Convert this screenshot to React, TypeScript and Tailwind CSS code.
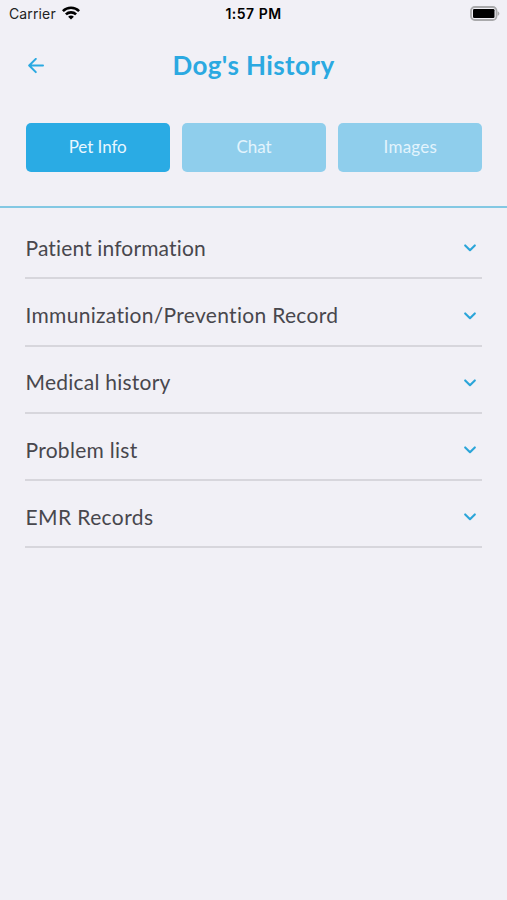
import {useState} from "react";

const tabs = [
    {label: "Pet Info", tracking: "tracking-[-0.05px]"},
    {label: "Chat", tracking: "tracking-[-0.05px]"},
    {label: "Images", tracking: "tracking-[0.25px]"},
];

const sections = [
    {title: "Patient information", tracking: "tracking-[0.14px]"},
    {title: "Immunization/Prevention Record", tracking: "tracking-[0.3px]"},
    {title: "Medical history", tracking: "tracking-[0.24px]"},
    {title: "Problem list", tracking: "tracking-[0.28px]"},
    {title: "EMR Records", tracking: "tracking-[0.4px]"},
];

const StatusBar = () => {
    return (
        <div className="grid h-7 grid-cols-3 items-center px-[7px] font-['Inter',sans-serif] text-black">
            <div className="flex items-center gap-[6px] pl-[2px]">
                <span className="text-[14px] leading-none tracking-[0.13px] text-[#222]">Carrier</span>
                <svg className="-mt-[2px] h-[14px] w-[18px]" viewBox="0 0 18 14" fill="none" stroke="currentColor" strokeWidth="2.6">
                    <path d="M0.9 5.1C5.4 0.7 12.6 0.7 17.1 5.1" />
                    <path d="M3.9 8.4C6.7 5.7 11.3 5.7 14.1 8.4" />
                    <path d="M9 13.6L6.1 10.7C7.7 9.2 10.3 9.2 11.9 10.7Z" fill="currentColor" stroke="none" />
                </svg>
            </div>
            <span className="text-center text-[14px] font-semibold leading-none tracking-[0.5px]">1:57 PM</span>
            <svg className="-mt-[2px] h-[15px] w-[31px] justify-self-end" viewBox="0 0 31 15">
                <rect x="2" y="1" width="25.5" height="13" rx="3.8" fill="#f1f0f6" stroke="#a9a9ab" strokeWidth="1.8" />
                <rect x="4" y="3" width="21.5" height="9" rx="1.2" fill="#000" />
                <path d="M28.6 5.2C31 6.2 31 8.8 28.6 9.8Z" fill="#a9a9ab" />
            </svg>
        </div>
    )
}

const App = () => {
    const [activeTab, setActiveTab] = useState("Pet Info");

    return (
        <main className="h-[900px] w-full bg-[#f1f0f6] font-['Lato',sans-serif]">
            <StatusBar />

            {/* Header */}
            <header className="grid h-[75px] grid-cols-[40px_1fr_40px] items-center px-[25px]">
                <button aria-label="Back" className="text-[#2ba9e1]">
                    <svg className="ml-[3px] h-4 w-4" viewBox="0 0 16 16" fill="none" stroke="currentColor" strokeWidth="2" strokeLinecap="round" strokeLinejoin="round">
                        <path d="M15 7.5H1.6M7.8 0.9L1.2 7.5L7.8 14.1" />
                    </svg>
                </button>
                <h1 className="pb-[2px] text-center text-[26px] font-bold leading-none tracking-[0.4px] text-[#2ba9e1]">Dog&apos;s History</h1>
            </header>

            {/* Tabs */}
            <nav className="grid grid-cols-3 gap-3 pb-[34px] pl-[25.5px] pr-[24.5px] pt-5">
                {tabs.map((tab) => (
                    <button
                        key={tab.label}
                        onClick={() => setActiveTab(tab.label)}
                        className={`h-[49px] rounded-[5px] pb-[2px] text-[17px] ${tab.tracking} ${tab.label === activeTab ? "bg-[#2aabe4] text-[#e8f7ff]" : "bg-[#8fceec] text-[#e3f4fd]"}`}
                    >
                        {tab.label}
                    </button>
                ))}
            </nav>

            {/* Record sections */}
            <div className="border-t-2 border-[#83c8e3] px-[25px] pt-[4px]">
                {sections.map((section) => (
                    <button
                        key={section.title}
                        className="flex h-[67.25px] w-full items-center justify-between border-b-2 border-[#d7d6dc] pr-[6px] pt-[5.5px] text-left"
                    >
                        <span className={`pl-[0.5px] text-[21px] leading-none text-[#48474d] ${section.tracking}`}>{section.title}</span>
                        <svg className="mt-[2px] h-2 w-3" viewBox="0 0 12 8" fill="none" stroke="#2ba5d9" strokeWidth="2.1" strokeLinecap="round" strokeLinejoin="round">
                            <path d="M1.2 1.4L6 6.2L10.8 1.4" />
                        </svg>
                    </button>
                ))}
            </div>
        </main>
    )
}
export default App
